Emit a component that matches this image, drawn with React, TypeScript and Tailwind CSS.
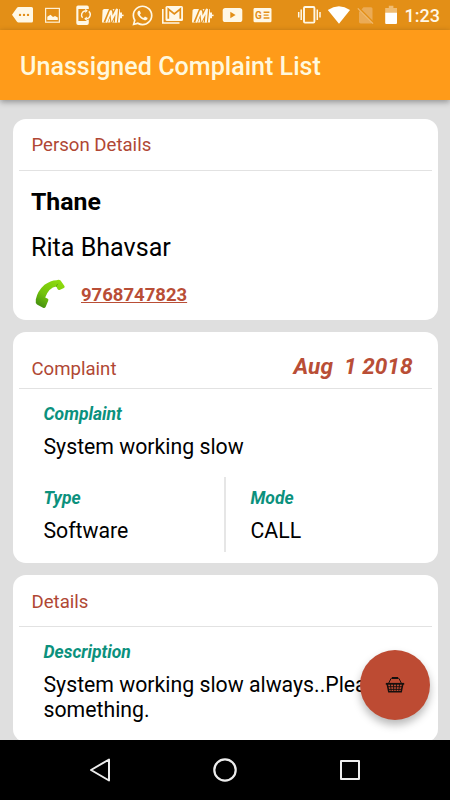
import React from 'react';
import { FaWhatsapp } from 'react-icons/fa';

const NotificationIcon: React.FC<{ children: React.ReactNode }> = ({ children }) => (
  <svg width="30" height="30" viewBox="0 0 30 30" fill="none" className="shrink-0">
    {children}
  </svg>
);

const WalletIcon = () => (
  <NotificationIcon>
    <path d="M7 9 H23 V12.4 H25 V18.2 H23 V22.5 H5 L5.6 10 Z" fill="#fff8e6" />
    <path d="M8.6 22.6 L14 9.5 L15 18.5 L20.4 8 L18.8 22.6" stroke="#e38f17" strokeWidth="4.2" />
    <path d="M9.2 22.6 L14 10.5 L15 19 L20 9 L18.8 22.6" stroke="#fff8e6" strokeWidth="2" />
    <path d="M24.5 15.4 H26.6" stroke="#fff8e6" strokeWidth="1.5" />
  </NotificationIcon>
);

const StatusBar = () => (
  <div className="h-[30px] shrink-0 bg-[#e38f17] flex items-center justify-between pl-[7px] pr-[10px]">
    <div className="flex">
      <NotificationIcon>
        <path d="M11.5 7 H24.5 Q26 7 26 8.5 V21 Q26 22.5 24.5 22.5 H11.5 Q10.5 22.5 10 21.8 L5 14.8 L10 7.8 Q10.5 7 11.5 7 Z" fill="#fff8e6" />
        <circle cx="13" cy="14.9" r="1.2" fill="#e38f17" />
        <circle cx="17" cy="14.9" r="1.2" fill="#e38f17" />
        <circle cx="21" cy="14.9" r="1.2" fill="#e38f17" />
      </NotificationIcon>
      <NotificationIcon>
        <rect x="8.6" y="8.4" width="13.8" height="13.8" stroke="#fff0d4" strokeWidth="1.2" />
        <path d="M10.3 20 V16.8 L13.5 14.8 L16 17 L18 16 L20.8 17.6 V20 Z" fill="#fff8e6" />
      </NotificationIcon>
      <NotificationIcon>
        <path d="M11 5.5 H20 Q21.8 5.5 21.8 7.3 V9 H11.4 V21 H19.8 V20 L21.8 19.5 V23 Q21.8 25 20 25 H11.2 Q9.3 25 9.3 23 V7.3 Q9.3 5.5 11 5.5 Z" fill="#fff8e6" />
        <path d="M15.6 17.8 A4.2 4.2 0 0 1 18.4 10.8" stroke="#fff8e6" strokeWidth="1.4" />
        <path d="M21.8 11.4 A4.2 4.2 0 0 1 19.4 18.8" stroke="#fff8e6" strokeWidth="1.4" />
        <path d="M18.2 8.6 V13 L20.8 10.8 Z M19.8 16.6 V21 L17.2 18.8 Z" fill="#fff8e6" />
      </NotificationIcon>
      <WalletIcon />
      <div className="w-[30px] h-[30px] flex items-center justify-center">
        <FaWhatsapp size={23} color="#fff8e6" />
      </div>
      <NotificationIcon>
        <path d="M5.8 9 V23 H22.5" stroke="#fff8e6" strokeWidth="1.6" />
        <rect x="8.5" y="6" width="17.5" height="15" rx="1.5" fill="#fff8e6" />
        <path d="M11.3 18.8 V9 L17.3 14 L23.3 9 V18.8" stroke="#e38f17" strokeWidth="1.7" />
      </NotificationIcon>
      <WalletIcon />
      <NotificationIcon>
        <rect x="5.7" y="8" width="19.6" height="14" rx="2.6" fill="#fff8e6" />
        <path d="M13.3 11.8 V18.2 L18.6 15 Z" fill="#e38f17" />
      </NotificationIcon>
      <NotificationIcon>
        <rect x="6.5" y="8" width="18" height="14.3" rx="1.4" fill="#fff8e6" />
        <text x="7.9" y="18.7" fontSize="10" fontWeight="700" fontFamily="Roboto" fill="#e38f17">G</text>
        <path d="M16.6 12.2 H22.4 M16.6 15.1 H21.6 M16.6 18 H22.4" stroke="#e38f17" strokeWidth="1.4" />
      </NotificationIcon>
    </div>
    <div className="flex items-center">
      <NotificationIcon>
        <rect x="10" y="7" width="10.4" height="15.6" rx="1" stroke="#fff8e6" strokeWidth="1.9" />
        <path d="M7.2 9.5 V20 M23.3 9.5 V20 M4.7 12 V17.6 M26 12 V17.6" stroke="#fff8e6" strokeWidth="1.5" />
      </NotificationIcon>
      <NotificationIcon>
        <path d="M3.8 10 Q15 2.6 26 10 L15 23.8 Z" fill="#fff" />
      </NotificationIcon>
      <svg width="24" height="30" viewBox="0 0 24 30">
        <path d="M9.5 7.3 H17 Q18.5 7.3 18.5 8.8 V22 Q18.5 23.4 17 23.4 H6.6 Q5 23.4 5 22 V12 Z" fill="#ebab55" />
        <path d="M4.8 8 L20.4 23.6" stroke="#e38f17" strokeWidth="1.8" />
        <path d="M3.8 8.4 L19 23.6" stroke="#f0bc72" strokeWidth="1.2" />
      </svg>
      <svg width="25" height="30" viewBox="0 0 25 30">
        <path d="M7.2 8 H10.8 V5.8 H15.4 V8 H19 V13 H7.2 Z" fill="#f0bc72" />
        <path d="M7.2 12.8 H19 V23 Q19 24 18 24 H8.2 Q7.2 24 7.2 23 Z" fill="#fff" />
      </svg>
      <span className="ml-[2px] pt-[1px] text-[18px] font-medium leading-[30px] text-[#fff8e6]">1:23</span>
    </div>
  </div>
);

const CardHeader: React.FC<{ title: string; date?: string; className: string }> = ({ title, date, className }) => (
  <div className={`mx-[6px] pl-[13px] pr-[19px] flex items-end justify-between border-b-[1.5px] border-[#e2e2e2] ${className}`}>
    <h2 className="text-[18.6px] leading-[22px] text-[#b04734]">{title}</h2>
    {date && (
      <span className="text-[22.6px] leading-[26px] font-bold italic text-[#b94e36] whitespace-pre">{date}</span>
    )}
  </div>
);

const Field: React.FC<{ label: string; value: string }> = ({ label, value }) => (
  <div>
    <div className="text-[17.5px] leading-[21px] font-bold italic text-[#0b917d]">{label}</div>
    <div className="mt-[9px] text-[21.25px] leading-[25px] text-black">{value}</div>
  </div>
);

const PhoneIcon = () => (
  <svg width="32" height="32" viewBox="0 0 32 32">
    <defs>
      <linearGradient id="receiver" x1="0.8" y1="0" x2="0.2" y2="1">
        <stop offset="0" stopColor="#8fdc0c" />
        <stop offset="0.6" stopColor="#72c20b" />
        <stop offset="1" stopColor="#438e10" />
      </linearGradient>
    </defs>
    <path
      d="M22.5 2.2 Q25 1.1 26.6 2.5 L30.6 8.2 Q31 9.6 29.4 10.2 L25.5 12 Q24.3 12.3 23.5 11 L22.3 8.6 Q15 9.6 11.2 19.5 L13.8 20.8 Q14.8 21.4 14.2 22.8 L11.6 28.9 Q10.8 30.6 9 29.8 L3 26.6 Q1.2 25 1.8 21.4 Q3.5 13 10.5 6.8 Q16.5 2.4 22.5 2.2 Z"
      fill="url(#receiver)"
    />
    <path d="M22.3 8.8 Q22.4 6.8 24 5.8" stroke="#5fae0a" strokeWidth="1" fill="none" />
  </svg>
);

const BasketIcon = () => (
  <svg width="20" height="18" viewBox="0 0 20 18" fill="none" stroke="#15100e">
    <path d="M3.6 7.3 L5.8 2.9 Q6.2 2 7.2 2 H12.8 Q13.8 2 14.2 2.9 L16.4 7.3" strokeWidth="1" />
    <path d="M7 2 H13" strokeWidth="2" />
    <path d="M0.8 7.8 H19.2" strokeWidth="1.8" />
    <path d="M2.2 8 L3.8 15.7 H16.2 L17.8 8" strokeWidth="1.5" />
    <path d="M5.4 8 L6.3 16 M8.5 8 L8.8 16 M11.5 8 L11.2 16 M14.6 8 L13.7 16 M2.8 10.7 H17.2 M3.4 13.4 H16.6" strokeWidth="0.9" />
  </svg>
);

const NavigationBar = () => (
  <div className="h-[60px] shrink-0 bg-black flex justify-center items-center gap-[95px]">
    <svg width="30" height="30" viewBox="0 0 30 30" fill="none" stroke="#ededed" strokeWidth="2" strokeLinejoin="round">
      <path d="M24 4.5 V25.5 L6 15 Z" />
    </svg>
    <svg width="30" height="30" viewBox="0 0 30 30" fill="none" stroke="#ededed" strokeWidth="2.2">
      <circle cx="15" cy="15" r="10.7" />
    </svg>
    <svg width="30" height="30" viewBox="0 0 30 30" fill="none" stroke="#ededed" strokeWidth="2" strokeLinejoin="round">
      <rect x="6" y="6" width="18" height="18" />
    </svg>
  </div>
);

export default function App() {
  return (
    <div className="relative w-[450px] h-[800px] flex flex-col overflow-hidden bg-[#dfdfdf] font-['Roboto',sans-serif]">
      <StatusBar />
      <header className="relative z-10 h-[70px] shrink-0 bg-[#ff9b19] pl-[20px] flex items-center shadow-[0_2px_6px_rgba(0,0,0,0.35)]">
        <h1 className="pt-[3px] text-[25.1px] leading-[30px] font-medium text-[#fff8dc]">Unassigned Complaint List</h1>
      </header>

      <main className="flex-1 min-h-0 overflow-hidden px-[12.5px] pt-[19px] flex flex-col gap-[12.5px]">
        <section className="h-[200.5px] shrink-0 bg-white rounded-[13px]">
          <CardHeader title="Person Details" className="h-[51.5px] pb-[14px]" />
          <div className="pl-[18.5px]">
            <div className="mt-[16px] text-[24.8px] leading-[30px] font-bold text-black">Thane</div>
            <div className="mt-[16.5px] text-[25.1px] leading-[30px] text-black">Rita Bhavsar</div>
            <div className="mt-[14.5px] pl-[3px] flex items-center">
              <PhoneIcon />
              <a href="tel:9768747823" className="ml-[15px] pt-[2px] text-[18.5px] leading-[24px] font-bold underline text-[#b94e36]">
                9768747823
              </a>
            </div>
          </div>
        </section>

        <section className="h-[230.5px] shrink-0 bg-white rounded-[13px]">
          <CardHeader title="Complaint" date="Aug  1 2018" className="h-[56.5px] pb-[8px]" />
          <div className="pl-[31px] pt-[15px]">
            <Field label="Complaint" value="System working slow" />
            <div className="mt-[18px] flex">
              <div className="w-[182px] h-[75px] pt-[11px] border-r-[2px] border-[#e6e6e6]">
                <Field label="Type" value="Software" />
              </div>
              <div className="pl-[25px] pt-[11px]">
                <Field label="Mode" value="CALL" />
              </div>
            </div>
          </div>
        </section>

        <section className="h-[167px] shrink-0 bg-white rounded-[13px]">
          <CardHeader title="Details" className="h-[52px] pb-[13.5px]" />
          <div className="pl-[31px] pr-[10px] pt-[15px]">
            <Field label="Description" value="System working slow always..Please do something." />
          </div>
        </section>
      </main>

      <NavigationBar />

      <button
        aria-label="Basket"
        className="absolute left-[360px] top-[650px] w-[70px] h-[70px] rounded-full bg-[#bd4b33] flex items-center justify-center shadow-[0_5px_9px_rgba(0,0,0,0.28)]"
      >
        <BasketIcon />
      </button>
    </div>
  );
}
